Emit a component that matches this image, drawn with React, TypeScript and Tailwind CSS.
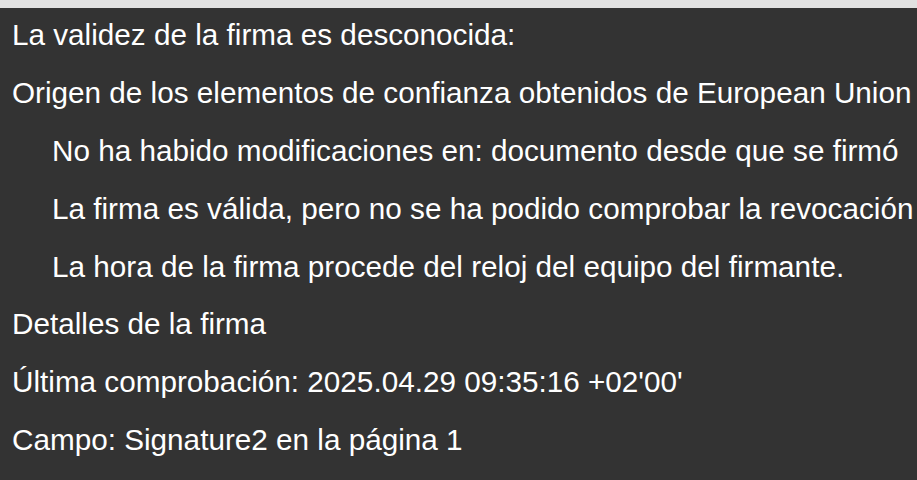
export default function App() {
  const rows: { t: string; indent?: boolean }[] = [
    { t: "La validez de la firma es desconocida:" },
    { t: "Origen de los elementos de confianza obtenidos de European Union" },
    { t: "No ha habido modificaciones en: documento desde que se firmó", indent: true },
    { t: "La firma es válida, pero no se ha podido comprobar la revocación", indent: true },
    { t: "La hora de la firma procede del reloj del equipo del firmante.", indent: true },
    { t: "Detalles de la firma" },
    { t: "Última comprobación: 2025.04.29 09:35:16 +02'00'" },
    { t: "Campo: Signature2 en la página 1" },
  ];
  return (
    <div className="w-[917px] h-[480px] overflow-hidden bg-[#333333] flex flex-col" style={{ fontFamily: '"Liberation Sans", Arial, sans-serif' }}>
      <div className="h-[8px] bg-[#e1e1e1] shrink-0" />
      <div className="flex flex-col pl-[12px] mt-[-2px]">
        {rows.map((r, i) => (
          <div
            key={i}
            className={`h-[57.9px] leading-[57.9px] text-[29.7px] text-white whitespace-nowrap ${r.indent ? "pl-[40px]" : ""}`}
          >
            {r.t}
          </div>
        ))}
      </div>
    </div>
  );
}
